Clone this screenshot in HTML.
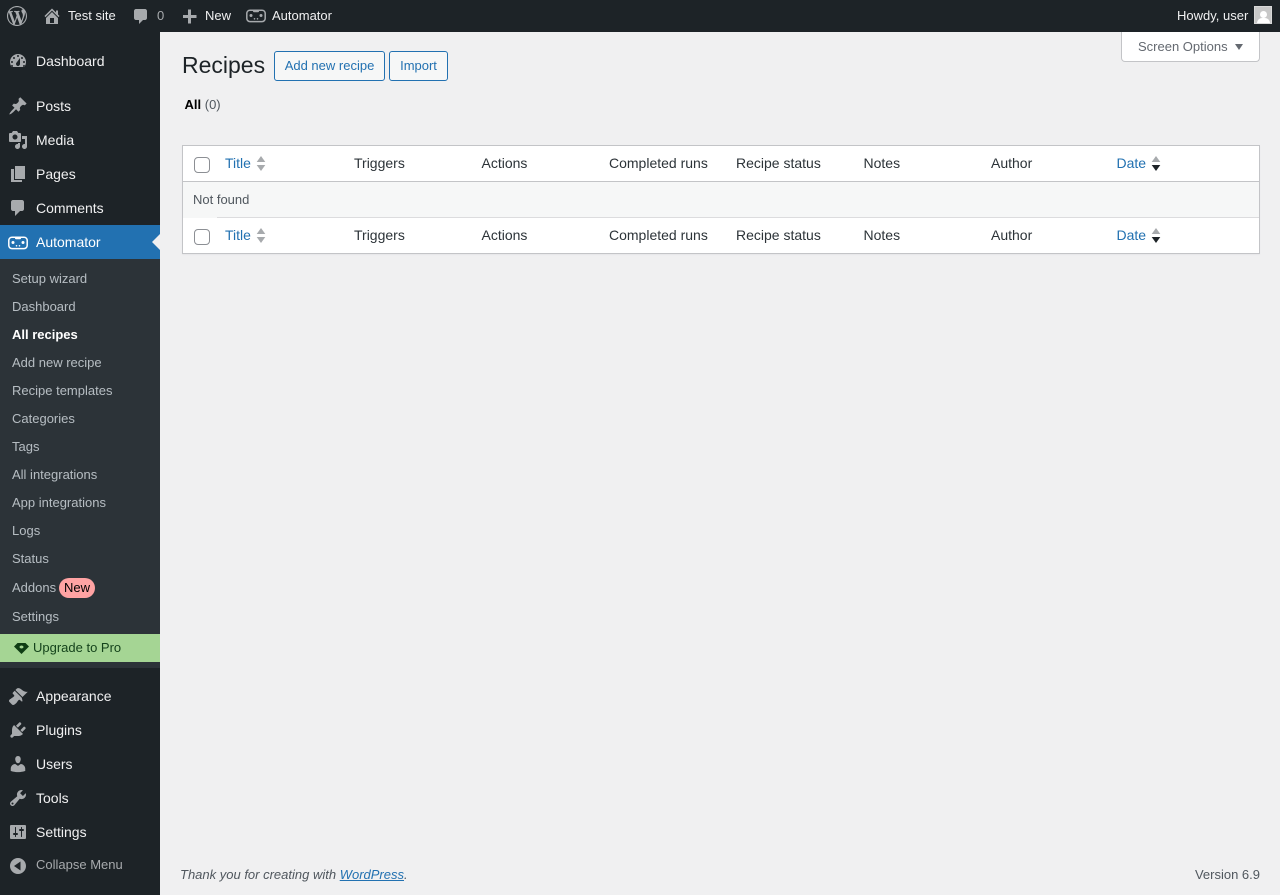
<!DOCTYPE html>
<html lang="en"><head><meta charset="utf-8"><title>Recipes</title>
<style>
*{box-sizing:border-box}
html,body{margin:0;padding:0;width:1280px;height:895px;overflow:hidden;background:#f0f0f1;font-family:"Liberation Sans",sans-serif;font-size:13px;color:#3c434a}
.a{position:absolute}
.t{position:absolute;white-space:nowrap;line-height:20px}
svg{position:absolute;display:block}
.bar{color:#f0f0f1;font-size:13px}
.m{color:#f0f0f1;font-size:14px;left:36px}
.s{color:rgba(240,246,252,.7);font-size:13px;left:12px}
.h{color:#2c3338;font-size:14px}
.l{color:#2271b1;font-size:14px}
.ic{fill:#a7aaad}
.btn{position:absolute;height:30px;border:1px solid #2271b1;border-radius:3px;background:#f6f7f7;color:#2271b1;font-size:13px;line-height:28px;text-align:center}
.cb{position:absolute;left:194px;width:16px;height:16px;background:#fff;border:1px solid #8c8f94;border-radius:4px}
</style></head><body>

<div class="a" style="left:0;top:0;width:1280px;height:32px;background:#1d2327"></div>
<div class="a" style="left:0;top:32px;width:160px;height:863px;background:#1d2327"></div>

<svg class="ic" style="left:7px;top:6px" width="20" height="20" viewBox="0 0 20 20"><path d="M20 10c0-5.51-4.49-10-10-10C4.48 0 0 4.49 0 10c0 5.52 4.48 10 10 10 5.51 0 10-4.48 10-10zM7.78 15.37L4.37 6.22c.55-.02 1.17-.08 1.17-.08.5-.06.44-1.13-.06-1.11 0 0-1.45.11-2.37.11-.18 0-.37 0-.58-.01C4.12 2.69 6.87 1.11 10 1.11c2.33 0 4.45.87 6.05 2.34-.68-.11-1.65.39-1.65 1.58 0 .74.45 1.36.9 2.1.35.61.55 1.36.55 2.46 0 1.49-1.4 5-1.4 5l-3.03-8.37c.54-.02.82-.17.82-.17.5-.05.44-1.25-.06-1.22 0 0-1.44.12-2.38.12-.87 0-2.33-.12-2.33-.12-.5-.03-.56 1.2-.06 1.22l.92.08 1.26 3.41zM17.41 10c.24-.64.74-1.87.43-4.25.7 1.29 1.05 2.71 1.05 4.25 0 3.29-1.73 6.24-4.4 7.78.97-2.59 1.94-5.2 2.92-7.78zM6.1 18.09C3.12 16.65 1.11 13.53 1.11 10c0-1.3.23-2.48.72-3.59C3.25 10.3 4.67 14.2 6.1 18.09zm4.03-6.63l2.58 6.98c-.86.29-1.76.45-2.71.45-.79 0-1.57-.11-2.29-.33.81-2.38 1.62-4.74 2.42-7.1z"/></svg>
<svg class="ic" style="left:42px;top:6px" width="20" height="20" viewBox="0 0 20 20"><path fill-rule="evenodd" d="M16 8.5l1.53 1.53-1.06 1.06L10 4.62l-6.47 6.47-1.06-1.06L10 2.5l4 4v-2h2v4zm-6-2.46l6 5.99V18H4v-5.97zM12 17v-5H8v5h4z"/></svg>
<div class="t bar" style="left:68px;top:6px">Test site</div>
<svg class="ic" style="left:131px;top:6px" width="20" height="20" viewBox="0 0 20 20"><path d="M5 3h9c1.1 0 2 .9 2 2v7c0 1.100-.9 2-2 2h-2l-4 4v-4H5c-1.100 0-2-.9-2-2V5c0-1.100.9-2 2-2z"/></svg>
<div class="t" style="left:157px;top:6px;color:#a7aaad">0</div>
<svg class="ic" style="left:180px;top:6px" width="20" height="20" viewBox="0 0 20 20"><path d="M8 3.500h3V9h5.500v3H11v5.500H8V12H3V9h5z"/></svg>
<div class="t bar" style="left:205px;top:6px">New</div>
<svg style="left:246px;top:8px" width="20" height="15" viewBox="0 0 20 15"><rect x=".8" y="2.200" width="18.400" height="11.400" rx="3.200" fill="none" stroke="#a7aaad" stroke-width="1.500"/><rect x="7" y="1.500" width="6" height="2.800" rx="1" fill="#a7aaad"/><circle cx="5" cy="7.500" r="1.500" fill="#a7aaad"/><circle cx="15" cy="7.500" r="1.500" fill="#a7aaad"/><circle cx="8.500" cy="10.800" r=".8" fill="#a7aaad"/><circle cx="11.500" cy="10.800" r=".8" fill="#a7aaad"/></svg>
<div class="t bar" style="left:272px;top:6px">Automator</div>
<div class="t bar" style="left:1177px;top:6px">Howdy, user</div>
<div class="a" style="left:1254px;top:6px;width:18px;height:18px;background:#c8c8c8;border:1px solid #d8d8d8;overflow:hidden"><div class="a" style="left:5px;top:4px;width:7px;height:7px;border-radius:50%;background:#fff"></div><div class="a" style="left:2px;top:11px;width:13px;height:8px;border-radius:5px 5px 0 0;background:#fff"></div></div>

<svg class="ic" style="left:8px;top:51px" width="20" height="20" viewBox="0 0 20 20"><path fill-rule="evenodd" d="M3.760 16h12.480c1.100-1.370 1.760-3.110 1.760-5 0-4.420-3.580-8-8-8s-8 3.580-8 8c0 1.890.660 3.630 1.760 5zM10 4c.550 0 1 .450 1 1s-.450 1-1 1-1-.450-1-1 .450-1 1-1zM6 6c.550 0 1 .450 1 1s-.450 1-1 1-1-.450-1-1 .450-1 1-1zm8 0c.550 0 1 .450 1 1s-.450 1-1 1-1-.450-1-1 .450-1 1-1zm-5.370 5.550L12 7v6c0 1.100-.900 2-2 2s-2-.900-2-2c0-.570.240-1.080.630-1.450zM4 10c.550 0 1 .450 1 1s-.450 1-1 1-1-.450-1-1 .450-1 1-1zm12 0c.550 0 1 .450 1 1s-.450 1-1 1-1-.450-1-1 .450-1 1-1zm-12 4c.550 0 1 .450 1 1s-.450 1-1 1-1-.450-1-1 .450-1 1-1zm12 0c.550 0 1 .450 1 1s-.450 1-1 1-1-.450-1-1 .450-1 1-1z"/></svg>
<div class="t m" style="top:51px">Dashboard</div>
<svg class="ic" style="left:8px;top:96px" width="20" height="20" viewBox="0 0 20 20"><path d="M10.440 3.020l1.820-1.820 6.360 6.350-1.830 1.820c-1.050-.680-2.480-.570-3.410.360l-.750.750c-.920.930-1.040 2.350-.350 3.410l-1.830 1.820-2.410-2.410-2.800 2.790c-.420.420-3.380 2.710-3.800 2.290s1.860-3.390 2.280-3.810l2.790-2.790L4.100 9.360l1.830-1.820c1.050.690 2.480.570 3.400-.360l.750-.750c.930-.920 1.050-2.350.360-3.410z"/></svg>
<div class="t m" style="top:96px">Posts</div>
<svg class="ic" style="left:8px;top:130px" width="20" height="20" viewBox="0 0 20 20"><path fill-rule="evenodd" d="M13 11V4c0-.550-.450-1-1-1h-1.670L9 1H5L3.670 3H2c-.550 0-1 .450-1 1v7c0 .550.450 1 1 1h10c.550 0 1-.450 1-1zM7 4.500c1.380 0 2.500 1.120 2.500 2.500S8.380 9.500 7 9.500 4.500 8.380 4.500 7 5.620 4.500 7 4.500zM14 6h5v10.500c0 1.380-1.120 2.500-2.500 2.500S14 17.880 14 16.500s1.120-2.500 2.500-2.500c.170 0 .340.020.500.050V9h-3V6zm-4 8.050V13h2v3.500c0 1.380-1.120 2.500-2.500 2.500S7 17.880 7 16.500 8.120 14 9.500 14c.170 0 .340.020.500.050z"/></svg>
<div class="t m" style="top:130px">Media</div>
<svg class="ic" style="left:8px;top:164px" width="20" height="20" viewBox="0 0 20 20"><path d="M7 15V2h10v13H7zm-1 1h8v2H3V5h3v11z"/></svg>
<div class="t m" style="top:164px">Pages</div>
<svg class="ic" style="left:8px;top:198px" width="20" height="20" viewBox="0 0 20 20"><path d="M5 2h9c1.100 0 2 .900 2 2v7c0 1.100-.900 2-2 2h-2l-5 5v-5H5c-1.100 0-2-.900-2-2V4c0-1.100.900-2 2-2z"/></svg>
<div class="t m" style="top:198px">Comments</div>

<div class="a" style="left:0;top:225px;width:160px;height:34px;background:#2271b1"></div>
<svg style="left:8px;top:235px" width="20" height="15" viewBox="0 0 20 15"><rect x=".8" y="2.200" width="18.400" height="11.400" rx="3.200" fill="none" stroke="#fff" stroke-width="1.500"/><rect x="7" y="1.500" width="6" height="2.800" rx="1" fill="#fff"/><circle cx="5" cy="7.500" r="1.500" fill="#fff"/><circle cx="15" cy="7.500" r="1.500" fill="#fff"/><circle cx="8.500" cy="10.800" r=".8" fill="#fff"/><circle cx="11.500" cy="10.800" r=".8" fill="#fff"/></svg>
<div class="t m" style="top:232px;color:#fff">Automator</div>
<svg style="left:152px;top:234px" width="8" height="16" viewBox="0 0 8 16"><path d="M8 0v16L0 8z" fill="#f0f0f1"/></svg>

<div class="a" style="left:0;top:259px;width:160px;height:409px;background:#2c3338"></div>
<div class="t s" style="top:269px">Setup wizard</div>
<div class="t s" style="top:297px">Dashboard</div>
<div class="t s" style="top:325px;color:#fff;font-weight:700">All recipes</div>
<div class="t s" style="top:353px">Add new recipe</div>
<div class="t s" style="top:381px">Recipe templates</div>
<div class="t s" style="top:409px">Categories</div>
<div class="t s" style="top:437px">Tags</div>
<div class="t s" style="top:465px">All integrations</div>
<div class="t s" style="top:493px">App integrations</div>
<div class="t s" style="top:521px">Logs</div>
<div class="t s" style="top:549px">Status</div>
<div class="t s" style="top:578px">Addons</div>
<div class="a" style="left:59px;top:578px;width:36px;height:20px;border-radius:10px;background:#ffa3a3;color:#000;font-size:13px;line-height:20px;text-align:center">New</div>
<div class="t s" style="top:607px">Settings</div>
<div class="a" style="left:0;top:634px;width:160px;height:28px;background:#a5d594"></div>
<svg style="left:14px;top:643px" width="15" height="11" viewBox="0 0 15 11"><path fill-rule="evenodd" d="M3.500 0h8L15 3.500 7.500 11 0 3.500zM7.500 2.500a2 1.500 0 1 0 .01 0z" fill="#0f3d14"/></svg>
<div class="t" style="left:33px;top:638px;color:#14431b;font-size:13px">Upgrade to Pro</div>

<svg class="ic" style="left:8px;top:686px" width="20" height="20" viewBox="0 0 20 20"><path d="M14.480 11.060L7.410 3.990l1.500-1.500c.500-.560 2.300-.470 3.510.320 1.210.800 1.430 1.280 2.910 2.100 1.180.640 2.450 1.260 4.450.850zm-.710.710L6.700 4.700 4.930 6.470c-.390.390-.390 1.020 0 1.410l1.060 1.060c.390.390.390 1.030 0 1.420-.600.600-1.430 1.110-2.210 1.690-.350.260-.700.530-1.010.840C1.430 13.230.400 14.930 1.400 15.930l2.670 2.670c1 1 2.700-.030 4.040-1.370.310-.310.580-.660.840-1.010.580-.780 1.090-1.610 1.690-2.210.390-.390 1.030-.390 1.420 0l1.060 1.060c.390.390 1.020.390 1.410 0z"/></svg>
<div class="t m" style="top:686px">Appearance</div>
<svg class="ic" style="left:8px;top:720px" width="20" height="20" viewBox="0 0 20 20"><path d="M13.110 4.360L9.870 7.600 8 5.730l3.240-3.240c.350-.340 1.050-.200 1.560.320.520.510.660 1.210.310 1.550zm-8 1.770l.910-1.120 9.010 9.010-1.190.840c-.710.710-2.630 1.160-3.820 1.160H6.140L4.900 17.260c-.590.590-1.540.590-2.120 0-.590-.580-.590-1.530 0-2.120l1.240-1.240v-3.880c0-1.130.400-3.190 1.090-3.890zm7.260 3.970l3.240-3.240c.340-.350 1.040-.210 1.550.310.520.510.660 1.210.310 1.550l-3.240 3.250z"/></svg>
<div class="t m" style="top:720px">Plugins</div>
<svg class="ic" style="left:8px;top:754px" width="20" height="20" viewBox="0 0 20 20"><path d="M10 9.250c-2.270 0-2.730-3.440-2.730-3.440C7 4.020 7.820 2 9.970 2c2.160 0 2.980 2.020 2.710 3.810 0 0-.410 3.440-2.680 3.440zm0 2.570L12.720 10c2.390 0 4.520 2.330 4.520 4.530v2.490s-3.650 1.130-7.240 1.130c-3.650 0-7.240-1.130-7.240-1.130v-2.490c0-2.250 1.940-4.480 4.470-4.480z"/></svg>
<div class="t m" style="top:754px">Users</div>
<svg class="ic" style="left:8px;top:788px" width="20" height="20" viewBox="0 0 20 20"><path fill-rule="evenodd" d="M16.680 9.770c-1.340 1.340-3.300 1.670-4.950.990l-5.410 6.520c-.990.990-2.590.990-3.580 0s-.990-2.590 0-3.570l6.520-5.420c-.680-1.650-.350-3.610.990-4.950 1.280-1.280 3.120-1.620 4.720-1.060l-2.890 2.890 2.820 2.820 2.860-2.870c.530 1.580.180 3.390-1.080 4.650zM3.810 16.210c.400.390 1.040.390 1.430 0 .400-.400.400-1.040 0-1.430-.390-.400-1.030-.400-1.430 0-.390.390-.390 1.030 0 1.430z"/></svg>
<div class="t m" style="top:788px">Tools</div>
<svg class="ic" style="left:8px;top:822px" width="20" height="20" viewBox="0 0 20 20"><path fill-rule="evenodd" d="M18 16V4c0-.550-.450-1-1-1H3c-.550 0-1 .450-1 1v12c0 .550.450 1 1 1h14c.550 0 1-.450 1-1zM8 11h1c.550 0 1 .450 1 1s-.450 1-1 1H8v1.500c0 .280-.220.500-.500.500s-.500-.220-.500-.500V13H6c-.550 0-1-.450-1-1s.450-1 1-1h1V5.500c0-.280.220-.500.500-.500s.500.220.500.500V11zm5-2h-1c-.550 0-1-.450-1-1s.450-1 1-1h1V5.500c0-.280.220-.500.500-.500s.500.220.500.500V7h1c.550 0 1 .450 1 1s-.450 1-1 1h-1v5.500c0 .280-.220.500-.500.500s-.500-.220-.500-.500V9z"/></svg>
<div class="t m" style="top:822px">Settings</div>
<svg class="ic" style="left:8px;top:856px" width="20" height="20" viewBox="0 0 20 20"><path fill-rule="evenodd" d="M18 10c0-4.420-3.580-8-8-8s-8 3.580-8 8 3.580 8 8 8 8-3.580 8-8zM12.500 14.500V5.500L6 10z"/></svg>
<div class="t" style="left:36px;top:855px;color:#a7aaad;font-size:13px">Collapse Menu</div>

<div class="t" style="left:182px;top:50px;font-size:23px;line-height:30px;color:#1d2327">Recipes</div>
<div class="btn" style="left:274px;top:51px;width:111px">Add new recipe</div>
<div class="btn" style="left:389px;top:51px;width:59px">Import</div>
<div class="a" style="left:1121px;top:32px;width:139px;height:30px;background:#fff;border:1px solid #c3c4c7;border-top:0;border-radius:0 0 4px 4px"></div>
<div class="t" style="left:1138px;top:37px;color:#646970">Screen Options</div>
<svg style="left:1235px;top:44px" width="8" height="6" viewBox="0 0 8 6"><path d="M0 0h8L4 6z" fill="#646970"/></svg>
<div class="t" style="left:184.500px;top:95px;color:#50575e"><b style="color:#000">All</b> (0)</div>

<div class="a" style="left:182px;top:145px;width:1078px;height:109px;background:#fff;border:1px solid #c3c4c7;box-shadow:0 1px 1px rgba(0,0,0,.04)"></div>
<div class="a" style="left:183px;top:181px;width:1076px;height:37px;background:#f6f7f7;border-top:1px solid #c3c4c7;border-bottom:1px solid #dcdcde"></div>
<div class="a" style="left:183px;top:217px;width:34px;height:1px;background:#f6f7f7"></div>
<div class="t" style="left:193px;top:190px;color:#50575e">Not found</div>

<div class="cb" style="top:157px"></div>
<div class="t l" style="left:225px;top:153px">Title</div>
<svg style="left:256px;top:155px" width="10" height="17" viewBox="0 0 10 17"><path d="M5 1l4.300 6H.7zM.7 10h8.600L5 16z" fill="#a7aaad"/></svg>
<div class="t h" style="left:354px;top:153px">Triggers</div>
<div class="t h" style="left:481.500px;top:153px">Actions</div>
<div class="t h" style="left:609px;top:153px">Completed runs</div>
<div class="t h" style="left:736px;top:153px">Recipe status</div>
<div class="t h" style="left:863.500px;top:153px">Notes</div>
<div class="t h" style="left:991px;top:153px">Author</div>
<div class="t l" style="left:1116.500px;top:153px">Date</div>
<svg style="left:1151px;top:155px" width="10" height="17" viewBox="0 0 10 17"><path d="M5 1l4.300 6H.7z" fill="#a7aaad"/><path d="M.7 10h8.600L5 16z" fill="#1d2327"/></svg>

<div class="cb" style="top:229px"></div>
<div class="t l" style="left:225px;top:225px">Title</div>
<svg style="left:256px;top:227px" width="10" height="17" viewBox="0 0 10 17"><path d="M5 1l4.300 6H.7zM.7 10h8.600L5 16z" fill="#a7aaad"/></svg>
<div class="t h" style="left:354px;top:225px">Triggers</div>
<div class="t h" style="left:481.500px;top:225px">Actions</div>
<div class="t h" style="left:609px;top:225px">Completed runs</div>
<div class="t h" style="left:736px;top:225px">Recipe status</div>
<div class="t h" style="left:863.500px;top:225px">Notes</div>
<div class="t h" style="left:991px;top:225px">Author</div>
<div class="t l" style="left:1116.500px;top:225px">Date</div>
<svg style="left:1151px;top:227px" width="10" height="17" viewBox="0 0 10 17"><path d="M5 1l4.300 6H.7z" fill="#a7aaad"/><path d="M.7 10h8.600L5 16z" fill="#1d2327"/></svg>

<div class="t" style="left:180px;top:865px;color:#50575e;font-style:italic">Thank you for creating with <span style="color:#2271b1;text-decoration:underline">WordPress</span>.</div>
<div class="t" style="right:20px;top:865px;color:#50575e">Version 6.9</div>
</body></html>
